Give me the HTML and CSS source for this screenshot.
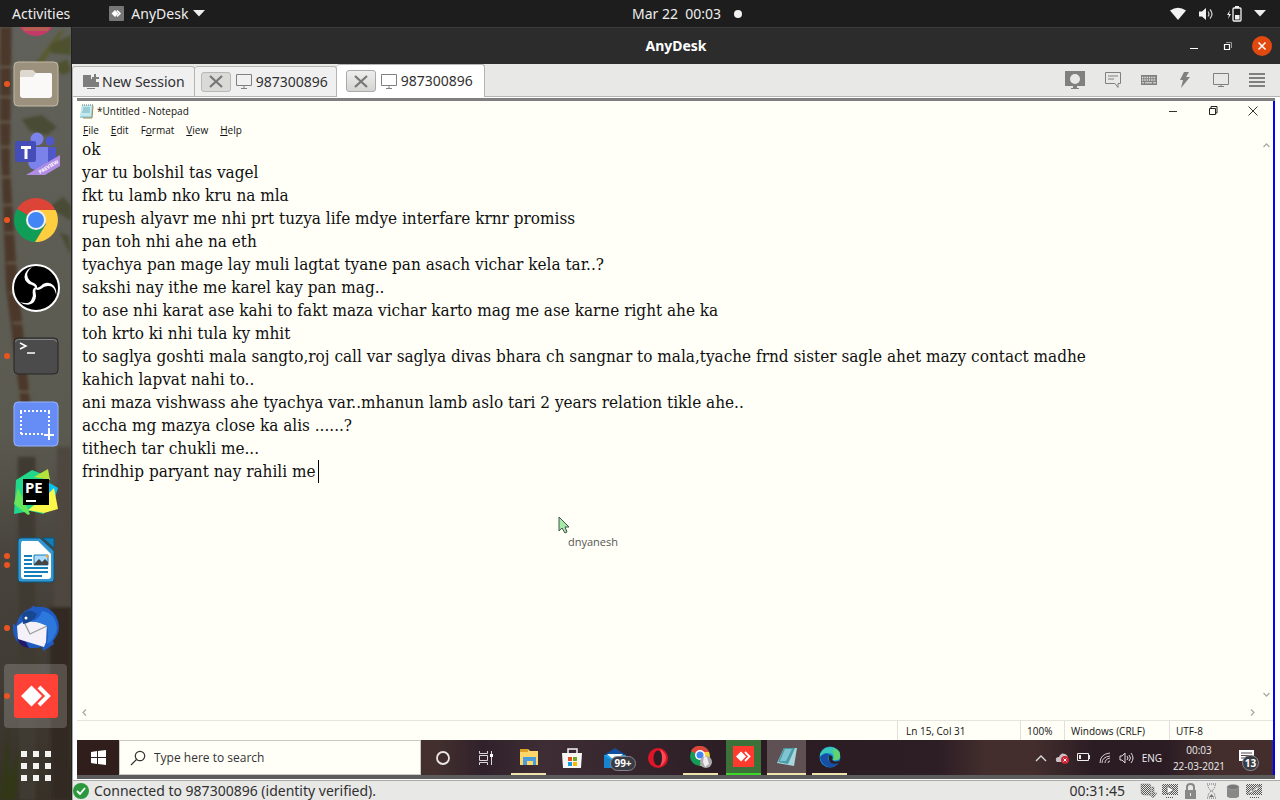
FILE: index.html
```html
<!DOCTYPE html>
<html lang="en">
<head>
<meta charset="utf-8">
<title>AnyDesk</title>
<link rel="stylesheet" href="styles.css">
</head>
<body>
<header class="topbar">
  <div class="topbar-left">
    <button class="plain">Activities</button>
    <button class="plain app-menu">
      <svg width="15" height="15" viewBox="0 0 15 15"><rect width="15" height="15" rx="1" fill="#777"/><path d="M2.500 7.500 6 4l3.500 3.500L6 11z" fill="#fff"/><path d="m8 4.500 3 3-3 3" fill="none" stroke="#fff" stroke-width="1.500"/></svg>
      AnyDesk
      <svg width="12" height="7" viewBox="0 0 12 7"><path d="M0 0h12L6 6.500z" fill="#eee"/></svg>
    </button>
  </div>
  <button class="plain date">Mar 22&nbsp; 00:03<span class="notify-dot"></span></button>
  <button class="plain topbar-right" aria-label="System menu">
    <svg width="16" height="14" viewBox="0 0 16 14"><path d="M0 3.500Q8-2 16 3.500L8 13z" fill="#f2f2f2"/></svg>
    <svg width="16" height="14" viewBox="0 0 16 14"><path d="M1 4.500h3L8 1v12L4 9.500H1z" fill="#f2f2f2"/><path d="M10 4.500q2 2.500 0 5M12 2.500q4 4.500 0 9" fill="none" stroke="#d0d0d0" stroke-width="1.200"/></svg>
    <svg width="16" height="16" viewBox="0 0 16 16"><path d="M4 4 1 9h2l-1 4 3-5H3z" fill="#f2f2f2"/><rect x="7" y="2" width="8" height="13" rx="1" fill="none" stroke="#f2f2f2" stroke-width="1.300"/><path d="M9 0h4v2H9zM9 9h4.500v4.500H9z" fill="#f2f2f2"/></svg>
    <svg width="12" height="7" viewBox="0 0 12 7"><path d="M0 0h12L6 6.500z" fill="#eee"/></svg>
  </button>
</header>

<div class="desktop">
  <nav class="dock" aria-label="Dock">
    <svg class="wallpaper" viewBox="0 0 72 773" preserveAspectRatio="none" aria-hidden="true">
      <defs>
        <linearGradient id="wall" x1="0" y1="0" x2="0" y2="1"><stop offset="0" stop-color="#60615a"/><stop offset=".52" stop-color="#5b5a50"/><stop offset=".68" stop-color="#49453e"/><stop offset="1" stop-color="#373128"/></linearGradient>
        <filter id="soft"><feGaussianBlur stdDeviation="1.500"/></filter>
      </defs>
      <rect width="72" height="773" fill="url(#wall)"/>
      <g filter="url(#soft)">
        <path d="M22 55 60 5l6-3-24 36z" fill="#585a2c"/><path d="M50 18 72 8v20l-20-2zM52 40l16-8 4 12-8 4z" fill="#4e512e"/>
        <path d="M22 92l20-4 16 12-10 8-18-4zM50 180l14-10 8 8v16zM60 205l10 4 2 20z" fill="#4a4c35"/>
        <path d="M0 0h12l-2 140 6 90 16 160-8 10L6 260 0 100z" fill="#4b392c"/>
        <path d="M0 40h12M0 70h12M0 95h11M0 120h12M1 150h11M3 178h11M5 206h12M7 236h13M10 266h12M13 296h12M16 330h12M19 365h12" stroke="#655a48" stroke-width="2"/>
        <path d="M18 430h18v343H20z" fill="#413a33"/><path d="M58 420h14v190H54z" fill="#4e4740"/><path d="M50 580h22v193H52z" fill="#332a22"/>
        <path d="M0 773 8 700l2 50 10-30-4 53z" fill="#303719"/>
      </g>
    </svg>
    <button class="dock-item peek" aria-label="Media"><svg width="48" height="14" viewBox="0 0 48 14"><path d="M5-10a19 19 0 0 0 38 0z" fill="#c33a68"/><path d="M8-5h32l-4 9H12z" fill="#b85b54"/></svg></button>
    <button class="dock-item running" aria-label="Files"><svg width="48" height="48" viewBox="0 0 48 48"><rect x="2" y="2" width="44" height="44" rx="4" fill="#9b917d" stroke="#c4bba6"/><path d="M8 12q0-2 2-2h11l3 3h14q2 0 2 2v8H8z" fill="#ddd9d0"/><path d="M8 17h13l3-4h14q2 0 2 2v20q0 3-3 3H11q-3 0-3-3z" fill="#faf9f8"/></svg></button>
    <button class="dock-item" aria-label="Teams"><svg width="48" height="48" viewBox="0 0 48 48"><circle cx="38" cy="13" r="4.500" fill="#5058c9"/><path d="M34 19h10v12q0 5-6 5h-4z" fill="#5058c9"/><circle cx="25" cy="11" r="6.500" fill="#7b83eb"/><path d="M16 19h20v14q0 9-10 9t-10-9z" fill="#7b83eb"/><rect x="3" y="13" width="21" height="21" rx="2" fill="#454db9"/><path d="M9 18h10v3h-3.500v10h-3V21H9z" fill="#fff"/><path d="M14 47 48 27v11L33 47z" fill="#b18ce5"/><text class="ribbon" x="28" y="46" transform="rotate(-31 28 46)">PREVIEW</text></svg></button>
    <button class="dock-item running" aria-label="Chrome"><svg width="48" height="48" viewBox="0 0 48 48"><path d="M24 24 5 13a22 22 0 0 1 38 0z" fill="#db4437"/><path d="M24 24 5 13a22 22 0 0 0 18 33l11-18z" fill="#109d58"/><path d="M24 14h19.500A22 22 0 0 1 23 46l11-18z" fill="#ffcd40"/><circle cx="24" cy="24" r="10" fill="#f1f1f1"/><circle cx="24" cy="24" r="8" fill="#4285f4"/></svg></button>
    <button class="dock-item" aria-label="OBS Studio"><svg width="48" height="48" viewBox="0 0 48 48"><circle cx="24" cy="24" r="23" fill="#000" stroke="#fff" stroke-width="2"/><path id="blade" d="M25 25Q22 21 17 20 11 16 13 10 15 5 20 3 13 9 16 14 18 18 22 19 26 21 25 25z" fill="#fff"/><use href="#blade" transform="rotate(120 24 24)"/><use href="#blade" transform="rotate(240 24 24)"/></svg></button>
    <button class="dock-item running" aria-label="Terminal"><svg width="48" height="48" viewBox="0 0 48 48"><rect x="2" y="6" width="44" height="36" rx="4" fill="#4b4b4b" stroke="#262626"/><path d="M3.500 10q0-2.500 3-2.500h35q3 0 3 2.500" fill="none" stroke="#858585"/><path d="m8 11 6 3-6 3" fill="none" stroke="#fff" stroke-width="1.500"/><path d="M15 21h8" stroke="#fff" stroke-width="1.500"/></svg></button>
    <button class="dock-item" aria-label="Screenshot"><svg width="48" height="48" viewBox="0 0 48 48"><rect x="2" y="2" width="44" height="44" rx="4" fill="#668df5" stroke="#98b3ff"/><path d="M8 11h30M9 34h23M9 12v23M37 12v18" stroke="#fff" stroke-width="2" stroke-dasharray="2 2"/><path d="M37 30v10M32 35h10" stroke="#fff" stroke-width="2"/></svg></button>
    <button class="dock-item" aria-label="PyCharm"><svg width="48" height="48" viewBox="0 0 48 48"><path d="M4 12 20 2l15 6-3 38-14-3-16 3z" fill="#21d789"/><path d="M2 36 6 20l12 26-2 1z" fill="#65e65c"/><path d="M36 2v12l10 6-6 18-16-20z" fill="#07c3f2"/><path d="m36 26 6-6 4 21-14 4-16-3z" fill="#fcf84a"/><path d="m22 9 14-8 2 11z" fill="#b4e43c"/><rect x="11" y="11" width="26" height="26"/><text class="pe" x="13" y="25">PE</text><path d="M14 33h10" stroke="#fff" stroke-width="2"/></svg></button>
    <button class="dock-item running twice" aria-label="LibreOffice Writer"><svg width="48" height="48" viewBox="0 0 48 48"><path d="M9 2h19l14 13v28q0 3-3 3H9q-3 0-3-3V5q0-3 3-3z" fill="#3496ce" stroke="#075781"/><path d="M10 5h16l13 13v22q0 3-3 3H12q-3 0-3-3V7z" fill="#fff"/><path d="M31 2h11v10z" fill="#137eb7" stroke="#075781"/><path d="M12 20h8M12 24h8M12 28h8M12 32h24M12 36h24M12 40h18" stroke="#137eb7" stroke-width="2"/><path d="M22 19h14v10H22z" fill="#a9dcff" stroke="#137eb7"/><path d="m22 28 5-5 3 3 3-3 3 3v3H22z" fill="#464646"/><path d="M33 19h3v4z" fill="#e5a53a"/></svg></button>
    <button class="dock-item running" aria-label="Thunderbird"><svg width="48" height="48" viewBox="0 0 48 48"><path d="M19 4q3-4 4-1 14-2 21 9 7 14-3 25l1 3-6 4-5 3-1-4Q16 46 8 40 0 34 1 19l3 3Q7 8 19 4z" fill="#205bc3"/><path d="M5 34q2 9 12 10l-3-6z" fill="#241b68"/><path d="m5 22 7-5 23 2-1 19-2 5L6 35z" fill="#f4f2f8"/><path d="m12 18 6 12 17-8" fill="none" stroke="#999" stroke-width="1.200"/><path d="M16 16q10 3 14-9 14 2 15 18-3 12-10 15 2-12 0-18-8-4-19-6z" fill="#2c78dd"/><path d="M10 10q7-7 15 0-3 8-14 10z" fill="#17478f"/><circle cx="14" cy="14" r="1.500" fill="#fff"/></svg></button>
    <button class="dock-item running active" aria-label="AnyDesk"><svg width="48" height="48" viewBox="0 0 48 48"><rect x="2" y="2" width="44" height="44" rx="3" fill="#ff4136"/><path d="M9 24 19.500 13.500 30 24 19.500 34.500z" fill="#fff"/><path d="m27 15 9 9-9 9" fill="none" stroke="#fff" stroke-width="4"/></svg></button>
    <button class="dock-item apps" aria-label="Show applications"><svg width="30" height="30" viewBox="0 0 30 30"><path d="M3 0v30M15 0v30M27 0v30" stroke="#f3f3f2" stroke-width="6" stroke-dasharray="6"/></svg></button>
  </nav>

  <section class="window">
    <div class="titlebar">
      <span></span>
      <h1>AnyDesk</h1>
      <div class="win-controls">
        <button class="plain" aria-label="Minimize"><svg width="10" height="10" viewBox="0 0 10 10"><path d="M1 7.500h8" stroke="#fff"/></svg></button>
        <button class="plain" aria-label="Restore"><svg width="10" height="10" viewBox="0 0 10 10"><path d="M3 1.500h5.500V7" fill="none" stroke="#999"/><path d="M1.500 3.500h5v5h-5z" fill="none" stroke="#fff" stroke-width="1.200"/></svg></button>
        <button class="plain close" aria-label="Close"><svg width="10" height="10" viewBox="0 0 10 10"><path d="m1.500 1.500 7 7m0-7-7 7" stroke="#fff" stroke-width="1.500"/></svg></button>
      </div>
    </div>

    <div class="tabbar">
      <div class="tab new"><button class="plain tab-label"><svg width="16" height="16" viewBox="0 0 16 16"><path d="M0 1h8v4h5v3h3v5H0zM4 14h8v1H4z" fill="#7d7d7d"/><path d="M12 0v8M9 4h7" stroke="#7d7d7d" stroke-width="2"/></svg>New Session</button></div>
      <div class="tab"><button class="tab-close" aria-label="Close session"><svg width="14" height="13" viewBox="0 0 14 13"><path d="m1 1 12 11M13 1 1 12" stroke="#777" stroke-width="2.200"/></svg></button><button class="plain tab-label"><svg width="16" height="15" viewBox="0 0 16 15"><path d="M.5.500h15v11H.500zM8 12v2M5 14.500h6" fill="none" stroke="#808080"/></svg>987300896</button></div>
      <div class="tab selected"><button class="tab-close" aria-label="Close session"><svg width="14" height="13" viewBox="0 0 14 13"><path d="m1 1 12 11M13 1 1 12" stroke="#777" stroke-width="2.200"/></svg></button><button class="plain tab-label"><svg width="16" height="15" viewBox="0 0 16 15"><path d="M.5.500h15v11H.500zM8 12v2M5 14.500h6" fill="none" stroke="#808080"/></svg>987300896</button></div>
      <div class="tools">
        <button class="plain" aria-label="Session"><svg width="20" height="18" viewBox="0 0 20 18"><path d="M0 0h20v15H0zM8 15h4v2H8zM6 17h8v1H6z" fill="#808080"/><circle cx="10" cy="8" r="5" fill="#e8e8e7"/></svg></button>
        <button class="plain" aria-label="Chat"><svg width="16" height="16" viewBox="0 0 16 16"><path d="M.5.500h15v11H13v4l-3-4H.500zM3 4h10M3 7h6" fill="none" stroke="#808080"/></svg></button>
        <button class="plain" aria-label="Keyboard"><svg width="16" height="10" viewBox="0 0 16 10"><rect width="16" height="10" fill="#808080"/><path d="M1 2.500h14M1 5h14" stroke="#e8e8e7" stroke-width="1.300" stroke-dasharray="1.300 1"/><path d="M1 7.800h2m1 0h7m1 0h3" stroke="#e8e8e7"/></svg></button>
        <button class="plain" aria-label="Actions"><svg width="16" height="16" viewBox="-2 0 16 16"><path d="M5 0h5L7 5h4L2 16l2-8H1z" fill="#808080"/></svg></button>
        <button class="plain" aria-label="Display"><svg width="16" height="15" viewBox="0 0 16 15"><path d="M.5.500h15v11H.500zM8 12v2M5 13.500h6" fill="none" stroke="#808080"/></svg></button>
        <button class="plain" aria-label="Menu"><svg width="16" height="14" viewBox="0 0 16 14"><path d="M0 1h16M0 5h16M0 9h16M0 13h16" stroke="#808080" stroke-width="2"/></svg></button>
      </div>
    </div>

    <div class="viewport">
      <main class="remote">
        <div class="notepad">
          <div class="np-title">
            <svg width="15" height="15" viewBox="0 0 15 15"><path d="M3 1h11l-1 13H1z" fill="#9bd3da"/><path d="M3 1h10l-1 11H1z" fill="#c4eaf0"/><path d="M4 4h7M4 6h7M3 8h8" stroke="#75aeb8"/><path d="M3 1h11" stroke="#536f77" stroke-dasharray="1 1"/><path d="m14 2-1 12H4" fill="none" stroke="#a08855"/></svg>
            <h2>*Untitled - Notepad</h2>
            <button class="plain" aria-label="Minimize Notepad"><svg width="10" height="10" viewBox="0 0 10 10"><path d="M1 5.500h8" stroke="#333"/></svg></button>
            <button class="plain" aria-label="Restore Notepad"><svg width="10" height="10" viewBox="0 0 10 10"><path d="M1.500 2.500h6v6h-6zM3 2V.500h6V7H8" fill="none" stroke="#222"/></svg></button>
            <button class="plain" aria-label="Close Notepad"><svg width="10" height="10" viewBox="0 0 10 10"><path d="m.5.500 9 9m0-9-9 9" stroke="#333"/></svg></button>
          </div>
          <div class="np-menu"><button class="plain"><u>F</u>ile</button><button class="plain"><u>E</u>dit</button><button class="plain">F<u>o</u>rmat</button><button class="plain"><u>V</u>iew</button><button class="plain"><u>H</u>elp</button></div>
          <div class="editor">
            <textarea class="note" wrap="off" spellcheck="false" aria-label="Text editor">ok
yar tu bolshil tas vagel
fkt tu lamb nko kru na mla
rupesh alyavr me nhi prt tuzya life mdye interfare krnr promiss
pan toh nhi ahe na eth
tyachya pan mage lay muli lagtat tyane pan asach vichar kela tar..?
sakshi nay ithe me karel kay pan mag..
to ase nhi karat ase kahi to fakt maza vichar karto mag me ase karne right ahe ka
toh krto ki nhi tula ky mhit
to saglya goshti mala sangto,roj call var saglya divas bhara ch sangnar to mala,tyache frnd sister sagle ahet mazy contact madhe
kahich lapvat nahi to..
ani maza vishwass ahe tyachya var..mhanun lamb aslo tari 2 years relation tikle ahe..
accha mg mazya close ka alis ......?
tithech tar chukli me...
frindhip paryant nay rahili me</textarea>
            <span class="caret"></span>
            <div class="pointer"><svg width="12" height="18" viewBox="0 0 12 18"><path d="M1 1v14l3-3 3 5 2-1-2-5h4z" fill="#a6eaa7" stroke="#43534b"/></svg><span>dnyanesh</span></div>
            <div class="vscroll"><svg width="7" height="5" viewBox="0 0 7 5"><path d="m.5 4 3-3 3 3" fill="none" stroke="#aaa" stroke-width="1.300"/></svg><svg width="7" height="5" viewBox="0 0 7 5"><path d="m.5 1 3 3 3-3" fill="none" stroke="#aaa" stroke-width="1.300"/></svg></div>
          </div>
          <div class="hscroll"><svg width="5" height="7" viewBox="0 0 5 7"><path d="m4 .5-3 3 3 3" fill="none" stroke="#aaa" stroke-width="1.300"/></svg><svg width="5" height="7" viewBox="0 0 5 7"><path d="m1 .5 3 3-3 3" fill="none" stroke="#aaa" stroke-width="1.300"/></svg></div>
          <div class="np-status"><span class="pos">Ln 15, Col 31</span><span class="pct">100%</span><span class="eol">Windows (CRLF)</span><span class="enc">UTF-8</span></div>
        </div>

        <footer class="taskbar">
          <button class="task start" aria-label="Start"><svg width="15" height="15" viewBox="0 0 15 15"><path d="m0 2 6-1v6H0zm7-1 8-1v7H7zM0 8h6v6l-6-1zm7 0h8v7l-8-1z" fill="#fff"/></svg></button>
          <label class="search"><svg width="16" height="16" viewBox="0 0 16 16"><circle cx="10" cy="6" r="4.700" fill="none" stroke="#333" stroke-width="1.200"/><path d="M6.500 9.500 1 15" stroke="#333" stroke-width="1.200"/></svg><input type="text" placeholder="Type here to search" aria-label="Search"></label>
          <button class="task" aria-label="Cortana"><svg width="16" height="16" viewBox="0 0 16 16"><circle cx="8" cy="8" r="6" fill="none" stroke="#ece5e8" stroke-width="1.800"/></svg></button>
          <button class="task" aria-label="Task view"><svg width="16" height="16" viewBox="0 0 16 16"><path d="M1.500 1v2.500h8V1M1.500 5.500h8v5h-8zM1.500 15v-2.500h8V15M13.500 1v14" fill="none" stroke="#ded7da"/><path d="M12 4h3v3h-3z" fill="#fff"/></svg></button>
          <button class="task open" aria-label="File Explorer"><svg width="20" height="20" viewBox="0 0 20 20"><path d="M1 2h8l2 2h8v14H1z" fill="#ffd66a"/><path d="M1 2h8v3H1z" fill="#dca029"/><path d="M4 18v-8h13v8h-3v-4H8v4z" fill="#4a9cdd"/></svg></button>
          <button class="task" aria-label="Store"><svg width="20" height="22" viewBox="0 0 20 22"><path d="M6 7V2h9v5" fill="none" stroke="#f5f5f5" stroke-width="1.500"/><path d="M0 6h20l-1 15H1z" fill="#f7f8f4"/><path d="M6 10h4v4H6z" fill="#e64d25"/><path d="M11 10h4v4h-4z" fill="#73aa1d"/><path d="M6 15h4v4H6z" fill="#159de7"/><path d="M11 15h4v4h-4z" fill="#ffb900"/></svg></button>
          <button class="task badge-host" aria-label="Mail"><svg width="22" height="20" viewBox="0 0 22 20"><path d="m0 7 11-7 11 7z" fill="#104f9e"/><path d="M0 7h22v13H0z" fill="#2aa6e8"/><path d="M3 6h16l-8 7z" fill="#f4fbfc"/><path d="m0 7 11 7 11-7v13H0z" fill="#1784d0"/></svg><span class="badge mail">99+</span></button>
          <button class="task" aria-label="Opera"><svg width="20" height="20" viewBox="0 0 20 20"><ellipse cx="10" cy="10" rx="10" ry="10" fill="#dc1627"/><ellipse cx="10" cy="10" rx="4.500" ry="7.500" fill="#2d1d24"/><path d="M12 1q12 8 0 18 4-9 0-18z" fill="#ff4956"/></svg></button>
          <button class="task open" aria-label="Chrome remote"><svg width="22" height="22" viewBox="0 0 22 22"><circle cx="10" cy="10" r="10" fill="#159b58"/><path d="M1 5a10 10 0 0 1 18 1l-9 4z" fill="#dc473c"/><path d="M10 6h9q3 8-5 13l-4 1 3-8z" fill="#ffcd40"/><circle cx="10" cy="9" r="5" fill="#fff"/><circle cx="10" cy="9" r="3.500" fill="#4285f4"/><circle cx="16" cy="16" r="6" fill="#aaa9ad"/><path d="m14 10 3 1 2 7-4 3-2-5z" fill="#f2eaec"/></svg></button>
          <button class="task open green" aria-label="AnyDesk remote"><svg width="21" height="21" viewBox="0 0 21 21"><path d="M0 0h21v21H0z" fill="#ff3b30"/><path d="m3 10.500 5-5 5 5-5 5z" fill="#fff"/><path d="m12 6 4.500 4.500L12 15" fill="none" stroke="#fff" stroke-width="1.800"/></svg></button>
          <button class="task open current" aria-label="Notepad"><svg width="20" height="20" viewBox="0 0 20 20"><path d="M7 1h13l-3 18-17-3z" fill="#a9d5db"/><path d="M7 1h11l-7 16-10-2z" fill="#4a9cab"/><path d="M8 2h7L9 14H3z" fill="#7fc4cf"/></svg></button>
          <button class="task open" aria-label="Edge"><svg width="22" height="22" viewBox="0 0 22 22"><circle cx="11" cy="11" r="10.500" fill="#1686d4"/><path d="M1 8Q5 0 13 1q9 2 8 10-1 4-7 3 2-7-5-7-5 0-8 4z" fill="#38c7b8"/><path d="M14 2q8 3 7 9-1 4-7 3l1-3z" fill="#62d46c"/><path d="M1 11q4-5 9-3-5 10 10 8-5 8-13 4-5-3-6-9z" fill="#164fa4"/><path d="M10 9q5 1 3 5 4 3 8 0l-1 3q-12 3-10-8z" fill="#2d1d24"/></svg></button>
          <div class="tray">
            <button class="plain" aria-label="Hidden icons"><svg width="12" height="8" viewBox="0 0 12 8"><path d="m1 7 5-5 5 5" fill="none" stroke="#ddd" stroke-width="1.300"/></svg></button>
            <button class="plain" aria-label="OneDrive"><svg width="14" height="12" viewBox="0 0 14 12"><path d="M1 9q-1-4 3-4Q6 0 10 2q3 1 3 5v3H2z" fill="#c9c1c4"/><circle cx="10" cy="8" r="4" fill="#ca2535"/><path d="m8.500 6.500 3 3m0-3-3 3" stroke="#fff"/></svg></button>
            <button class="plain" aria-label="Battery"><svg width="14" height="9" viewBox="0 0 14 9"><path d="M.5.500h11v7H.500zM12.500 2v4" fill="none" stroke="#eee"/><path d="M2 2h2v4H2z" fill="#eee"/></svg></button>
            <button class="plain" aria-label="Network"><svg width="12" height="12" viewBox="0 0 12 12"><path d="M1 11Q1 2 11 1M3 11q0-6 8-7M6 11q0-4 5-5M9 11q0-2 2-2" fill="none" stroke="#d5ccd0"/></svg></button>
            <button class="plain" aria-label="Volume"><svg width="15" height="12" viewBox="0 0 15 12"><path d="M1 4h2l3-3v10L3 8H1zM8 4q2 2 0 4M10 3q3 3 0 6M12 1q4 5 0 10" fill="none" stroke="#e5dce0"/></svg></button>
            <button class="plain lang">ENG</button>
            <button class="plain clock"><span>00:03</span><span>22-03-2021</span></button>
            <button class="plain center badge-host" aria-label="Notifications"><svg width="15" height="15" viewBox="0 0 15 15"><path d="M0 0h15v11H8l-3 3v-3H0z" fill="#fff"/><path d="M2 3h11M2 5.500h11M2 8h8" stroke="#57474b"/></svg><span class="badge count">13</span></button>
          </div>
        </footer>
      </main>
    </div>

    <div class="statusbar">
      <svg width="16" height="16" viewBox="0 0 16 16"><circle cx="8" cy="8" r="8" fill="#2c983e"/><path d="m4 8 3 3 5-6" fill="none" stroke="#fff" stroke-width="1.800"/></svg>
      <span>Connected to 987300896 (identity verified).</span>
      <span class="elapsed">00:31:45</span>
      <svg class="indicators" width="122" height="16" viewBox="0 0 122 16">
        <defs><pattern id="dots" width="2" height="2" patternUnits="userSpaceOnUse"><path d="M0 0h1v1H0zM1 1h1v1H1z" fill="#555"/></pattern></defs>
        <path d="M1 1h8q2 0 2 3v8H4q-3 0-3-3zM12 4h2v6h3l-4 5-3-3h2z" fill="url(#dots)" stroke="#888" stroke-width=".5"/>
        <path d="M22 1h16v11H22zM26 14h8v1h-8z" fill="url(#dots)"/><path d="m27 3 7 4-7 4z" fill="#fff" stroke="#777"/>
        <path d="M47 7V4q0-3 3.500-3T54 4v3" fill="none" stroke="#888" stroke-width="2"/><path d="M45 7h11v9H45z" fill="#888"/><path d="M50 10h1v3h-1z" fill="#eee"/>
        <path d="M67 1h9M67 15h9M68 2q0 4 3.500 6Q68 10 68 14M75 2q0 4-3.500 6 3.500 2 3.500 6" fill="none" stroke="#666" stroke-dasharray="1 1"/><path d="m69 14 2.500-3 2.500 3z" fill="#777"/>
        <path d="M87 4v9q0 2 6 2t6-2V4z" fill="#888"/><ellipse cx="93" cy="4" rx="6" ry="2.500" fill="#777" stroke="#aaa" stroke-width=".5"/>
        <path d="M106 1h16v11h-16zM109 14h10v1h-10z" fill="url(#dots)"/><path d="m108 11 4-6v3l8-6-4 7v-2z" fill="#fff" stroke="#777" stroke-width=".6"/>
      </svg>
    </div>
  </section>
</div>
</body>
</html>
```
FILE: styles.css
```css
* { box-sizing: border-box; }
body { margin: 0; height: 100vh; display: flex; flex-direction: column; overflow: hidden; font: 14px/20px "Noto Sans", sans-serif; color: #303030; }
svg { display: block; flex: none; }
button { font: inherit; color: inherit; cursor: default; }
h1, h2 { margin: 0; }
.plain { border: 0; padding: 0; background: none; display: flex; align-items: center; }

.topbar { flex: none; height: 27px; padding: 0 14px 0 12px; background: #1d1d1d; color: #eee; display: grid; grid-template-columns: 1fr auto 1fr; }
.topbar-left { display: flex; gap: 39px; }
.app-menu { gap: 5px; }
.app-menu svg:first-child { margin-right: 2px; }
.date { gap: 13px; padding-left: 96px; }
.notify-dot { width: 8px; height: 8px; border-radius: 4px; background: #f2f2f2; }
.topbar-right { justify-self: end; gap: 12px; }

.desktop { flex: 1; min-height: 0; display: flex; }
.dock { position: relative; width: 72px; flex: none; display: flex; flex-direction: column; border-right: 1px solid #222; overflow: hidden; }
.wallpaper { position: absolute; inset: 0; width: 100%; height: 100%; }
.dock-item { position: relative; flex: none; height: 64px; margin: 2px 4px; padding: 0; border: 0; border-radius: 4px; background: none; display: grid; place-items: center; }
.dock-item.peek { height: 23px; margin: 0 4px; place-items: start center; }
.dock-item.apps { height: 68px; }
.dock-item.active { background: #ffffff2e; }
.running::before { content: ""; position: absolute; left: 0; top: 29px; width: 6px; height: 6px; border-radius: 3px; background: #e95420; }
.running.twice::before { top: 25px; box-shadow: 0 9px #e95420; }
.ribbon { font: bold 5px "Noto Sans", sans-serif; fill: #fff; }
.pe { font: bold 15px "Noto Sans", sans-serif; fill: #fff; }

.window { flex: 1; min-width: 0; display: flex; flex-direction: column; background: #e8e8e7; }
.titlebar { flex: none; height: 37px; padding: 0 8px; background: #2c2c2c; border-top: 1px solid #3b3b3b; color: #fff; display: grid; grid-template-columns: 1fr auto 1fr; align-items: center; }
.titlebar h1 { font-size: 14px; }
.win-controls { justify-self: end; display: grid; grid-template-columns: 34px 29px 20px; align-items: center; }
.win-controls .close { height: 20px; border-radius: 10px; background: #e2490f; justify-content: center; }

.tabbar { flex: none; height: 33px; display: flex; align-items: flex-end; border-bottom: 1px solid #b5b5b1; }
.tab { height: 30px; padding: 0 8px 0 6px; display: flex; align-items: center; gap: 5px; background: #f0f0f0; border: 1px solid #b5b5b1; border-bottom: 0; border-left-width: 0; border-radius: 3px 3px 0 0; }
.tab.new { padding: 0 9px 0 10px; border-left-width: 1px; }
.new .tab-label { gap: 3px; }
.tab.selected { height: 33px; margin-bottom: -1px; padding: 0 11px 0 9px; background: #fff; }
.tab-label { gap: 4px; }
.tab-close { width: 30px; height: 20px; padding: 0; border: 1px solid #b8b8b4; border-radius: 3px; background: #dadad8; display: grid; place-items: center; }
.selected .tab-close { height: 22px; background: linear-gradient(#eee, #d4d4d2); border-color: #aaa; }
.tools { flex: 1; align-self: stretch; display: flex; justify-content: flex-end; align-items: center; gap: 20px; padding-right: 15px; }

.viewport { flex: 1; min-height: 0; padding: 1px 5px 1px 4px; background: #fff; border: solid #aaa; border-width: 0 0 1px 1px; display: flex; }
.remote { flex: 1; min-width: 0; display: flex; flex-direction: column; border-top: 3px solid #808080; border-bottom: 4px solid #5c5c5c; }
.notepad { flex: 1; min-height: 0; display: flex; flex-direction: column; background: #fffff8; border-right: 2px solid #00f; font: 10px/16px "Open Sans", sans-serif; color: #111; }
.np-title { height: 20px; padding: 0 15px 0 2px; display: flex; align-items: center; gap: 30px; }
.np-title h2 { flex: 1; margin-left: -27px; font-size: 10px; font-weight: normal; }
.np-menu { height: 17px; padding-left: 6px; display: flex; gap: 12px; }
.np-menu .plain { display: block; }
.editor { position: relative; flex: 1; min-height: 0; display: flex; }
.note { flex: 1; min-width: 0; margin: 0; padding: 0 5px; border: 0; outline: 0; resize: none; overflow: hidden; background: transparent; color: #101010; font: 17px/23px "DejaVu Serif Condensed", "DejaVu Serif", serif; white-space: pre; }
.caret { position: absolute; left: 241px; top: 322px; width: 1px; height: 23px; background: #000; }
.pointer { position: absolute; left: 481px; top: 378px; color: #555; }
.pointer span { display: block; margin-left: 10px; font-size: 11px; }
.vscroll { width: 12px; padding: 5px 2px 7px; display: flex; flex-direction: column; justify-content: space-between; }
.hscroll { height: 16px; padding: 0 18px 0 5px; display: flex; align-items: center; justify-content: space-between; }
.np-status { height: 20px; border-top: 1px solid #e5e5de; display: flex; justify-content: flex-end; line-height: 20px; }
.np-status span { padding-left: 8px; border-left: 1px solid #dfe1dc; }
.np-status .pos { width: 123px; }
.np-status .pct { width: 44px; padding-left: 6px; }
.np-status .eol { width: 105px; padding-left: 6px; }
.np-status .enc { width: 104px; padding-left: 6px; }

.taskbar { flex: none; height: 35px; display: flex; color: #eee; font: 12px/16px "Open Sans", sans-serif; background: linear-gradient(90deg, #3b2b2c, #432f2e 30%, #30212a 34%, #3e2d35 39%, #2b1c24 55%, #2d1d25 72%, #432e2d 76%, #432e2d 80%, #2b1c24 85%, #2b1c24 91%, #432e2d 95%); border-right: 2px solid #00f; }
.task { flex: none; width: 43px; padding: 0; border: 0; background: none; display: grid; place-items: center; }
.task.start { width: 42px; background: #301e1d; }
.search { flex: 0 1 302px; min-width: 0; padding-left: 10px; background: #fffff8; border: 1px solid #c9c9bf; display: flex; align-items: center; gap: 8px; }
.search input { flex: 1; min-width: 0; border: 0; padding: 0; background: none; outline: 0; font: 12px/20px "Open Sans", sans-serif; color: #333; }
.search input::placeholder { color: #333; opacity: 1; }
.task.open { margin: 0 4px; width: 35px; border-bottom: 2px solid #efe4ae; }
.task.green { background: #3d713a; border-color: #3fd82a; }
.task.current { width: 39px; margin: 0 2px; background: #5e5053; }
.badge-host { position: relative; }
.badge { position: absolute; border: 1px solid #89858a; border-radius: 8px; background: #3a3c45; color: #fff; font: bold 10px/13px "Open Sans", sans-serif; text-align: center; }
.badge.mail { left: 17px; top: 16px; width: 26px; }
.badge.count { left: 6px; top: 15px; width: 17px; border-radius: 9px; line-height: 14px; }
.tray { flex: 1; display: flex; justify-content: flex-end; align-items: stretch; gap: 8px; }
.lang { font-size: 10px; }
.clock { width: 58px; flex-direction: column; justify-content: center; font-size: 10px; line-height: 16px; }
.center { width: 37px; padding-left: 3px; }

.statusbar { flex: none; height: 19px; display: flex; align-items: center; padding-right: 18px; gap: 5px; border-left: 1px solid #aaa; }
.elapsed { margin-left: auto; }
.indicators { margin-left: 10px; }
```
